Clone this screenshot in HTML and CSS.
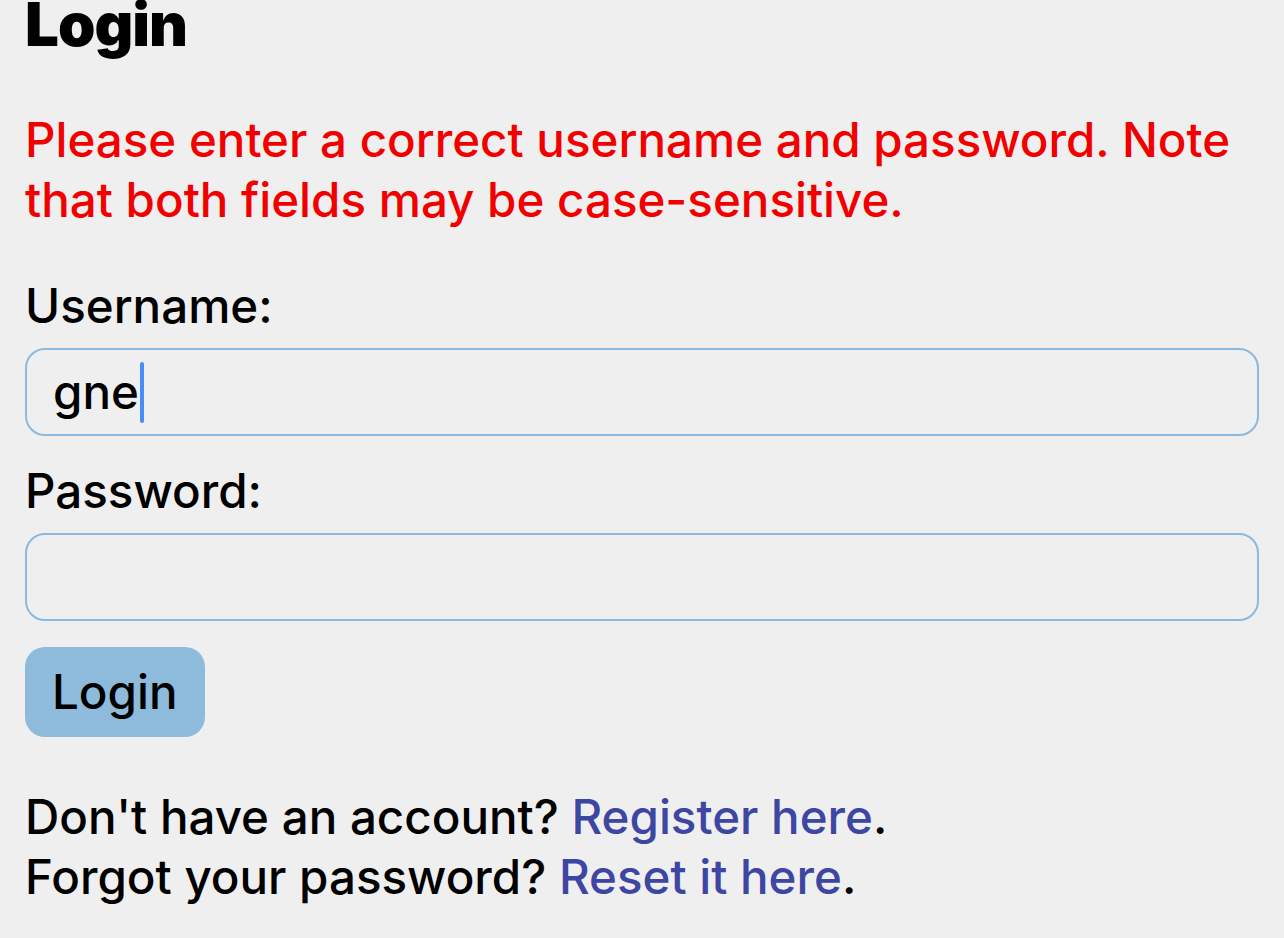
FILE: index.html
```html
<!DOCTYPE html>
<html lang="en">
<head>
  <meta charset="UTF-8">
  <meta name="viewport" content="width=device-width, initial-scale=1.0">
  <title>Login</title>
  <link rel="stylesheet" href="styles.css">
</head>
<body>
  <div class="page">
    <h1>Login</h1>

    <p class="error">Please enter a correct username and password. Note that both fields may be case-sensitive.</p>

    <form class="login_form" onsubmit="event.preventDefault()">
      <label for="username">Username:</label>
      <div id="username" class="field">gne<span class="caret"></span></div>

      <label for="password">Password:</label>
      <input id="password" class="field" type="password">

      <button type="submit">Login</button>
    </form>

    <p class="links">
      Don't have an account? <a href="#">Register here</a>.<br>
      Forgot your password? <a href="#">Reset it here</a>.
    </p>
  </div>
</body>
</html>
```

FILE: styles.css
```css
html {
  box-sizing: border-box;
}
*, *:before, *:after {
  box-sizing: inherit;
}
body {
  margin: 0;
  background-color: #efefef;
  color: #000;
  font-family: Inter, "Noto Sans", sans-serif;
  font-size: 47.5px;
  line-height: 60px;
}
.page {
  padding: 0 25px;
}
h1 {
  margin: -6px 0 0;
  font-size: 60px;
  line-height: 60px;
  font-weight: 900;
  letter-spacing: -1px;
}
.error {
  margin: 56px 0 0;
  color: #f20000;
  font-weight: 500;
}
.login_form {
  display: flex;
  flex-direction: column;
  align-items: flex-start;
  margin-top: 46px;
}
label {
  font-weight: 500;
}
.field {
  width: 100%;
  height: 88px;
  margin: 12px 0 25px;
  padding: 0 26px;
  border: 2px solid #8ab9e2;
  border-radius: 20px;
  background: transparent;
  font: inherit;
  font-weight: 500;
  line-height: 84px;
  display: flex;
  align-items: center;
}
.caret {
  display: inline-block;
  width: 4px;
  height: 61px;
  margin-left: 1px;
  border-radius: 2px;
  background-color: #4a8cf5;
}
#password {
  margin-bottom: 26px;
  outline: none;
}
button {
  height: 90px;
  padding: 0 27px;
  border: none;
  border-radius: 20px;
  background-color: #8ebadb;
  color: #000;
  font: inherit;
  font-weight: 500;
}
.links {
  margin: 50px 0 0;
  font-weight: 500;
}
.links a {
  color: #3d46a3;
  text-decoration: none;
}
```
